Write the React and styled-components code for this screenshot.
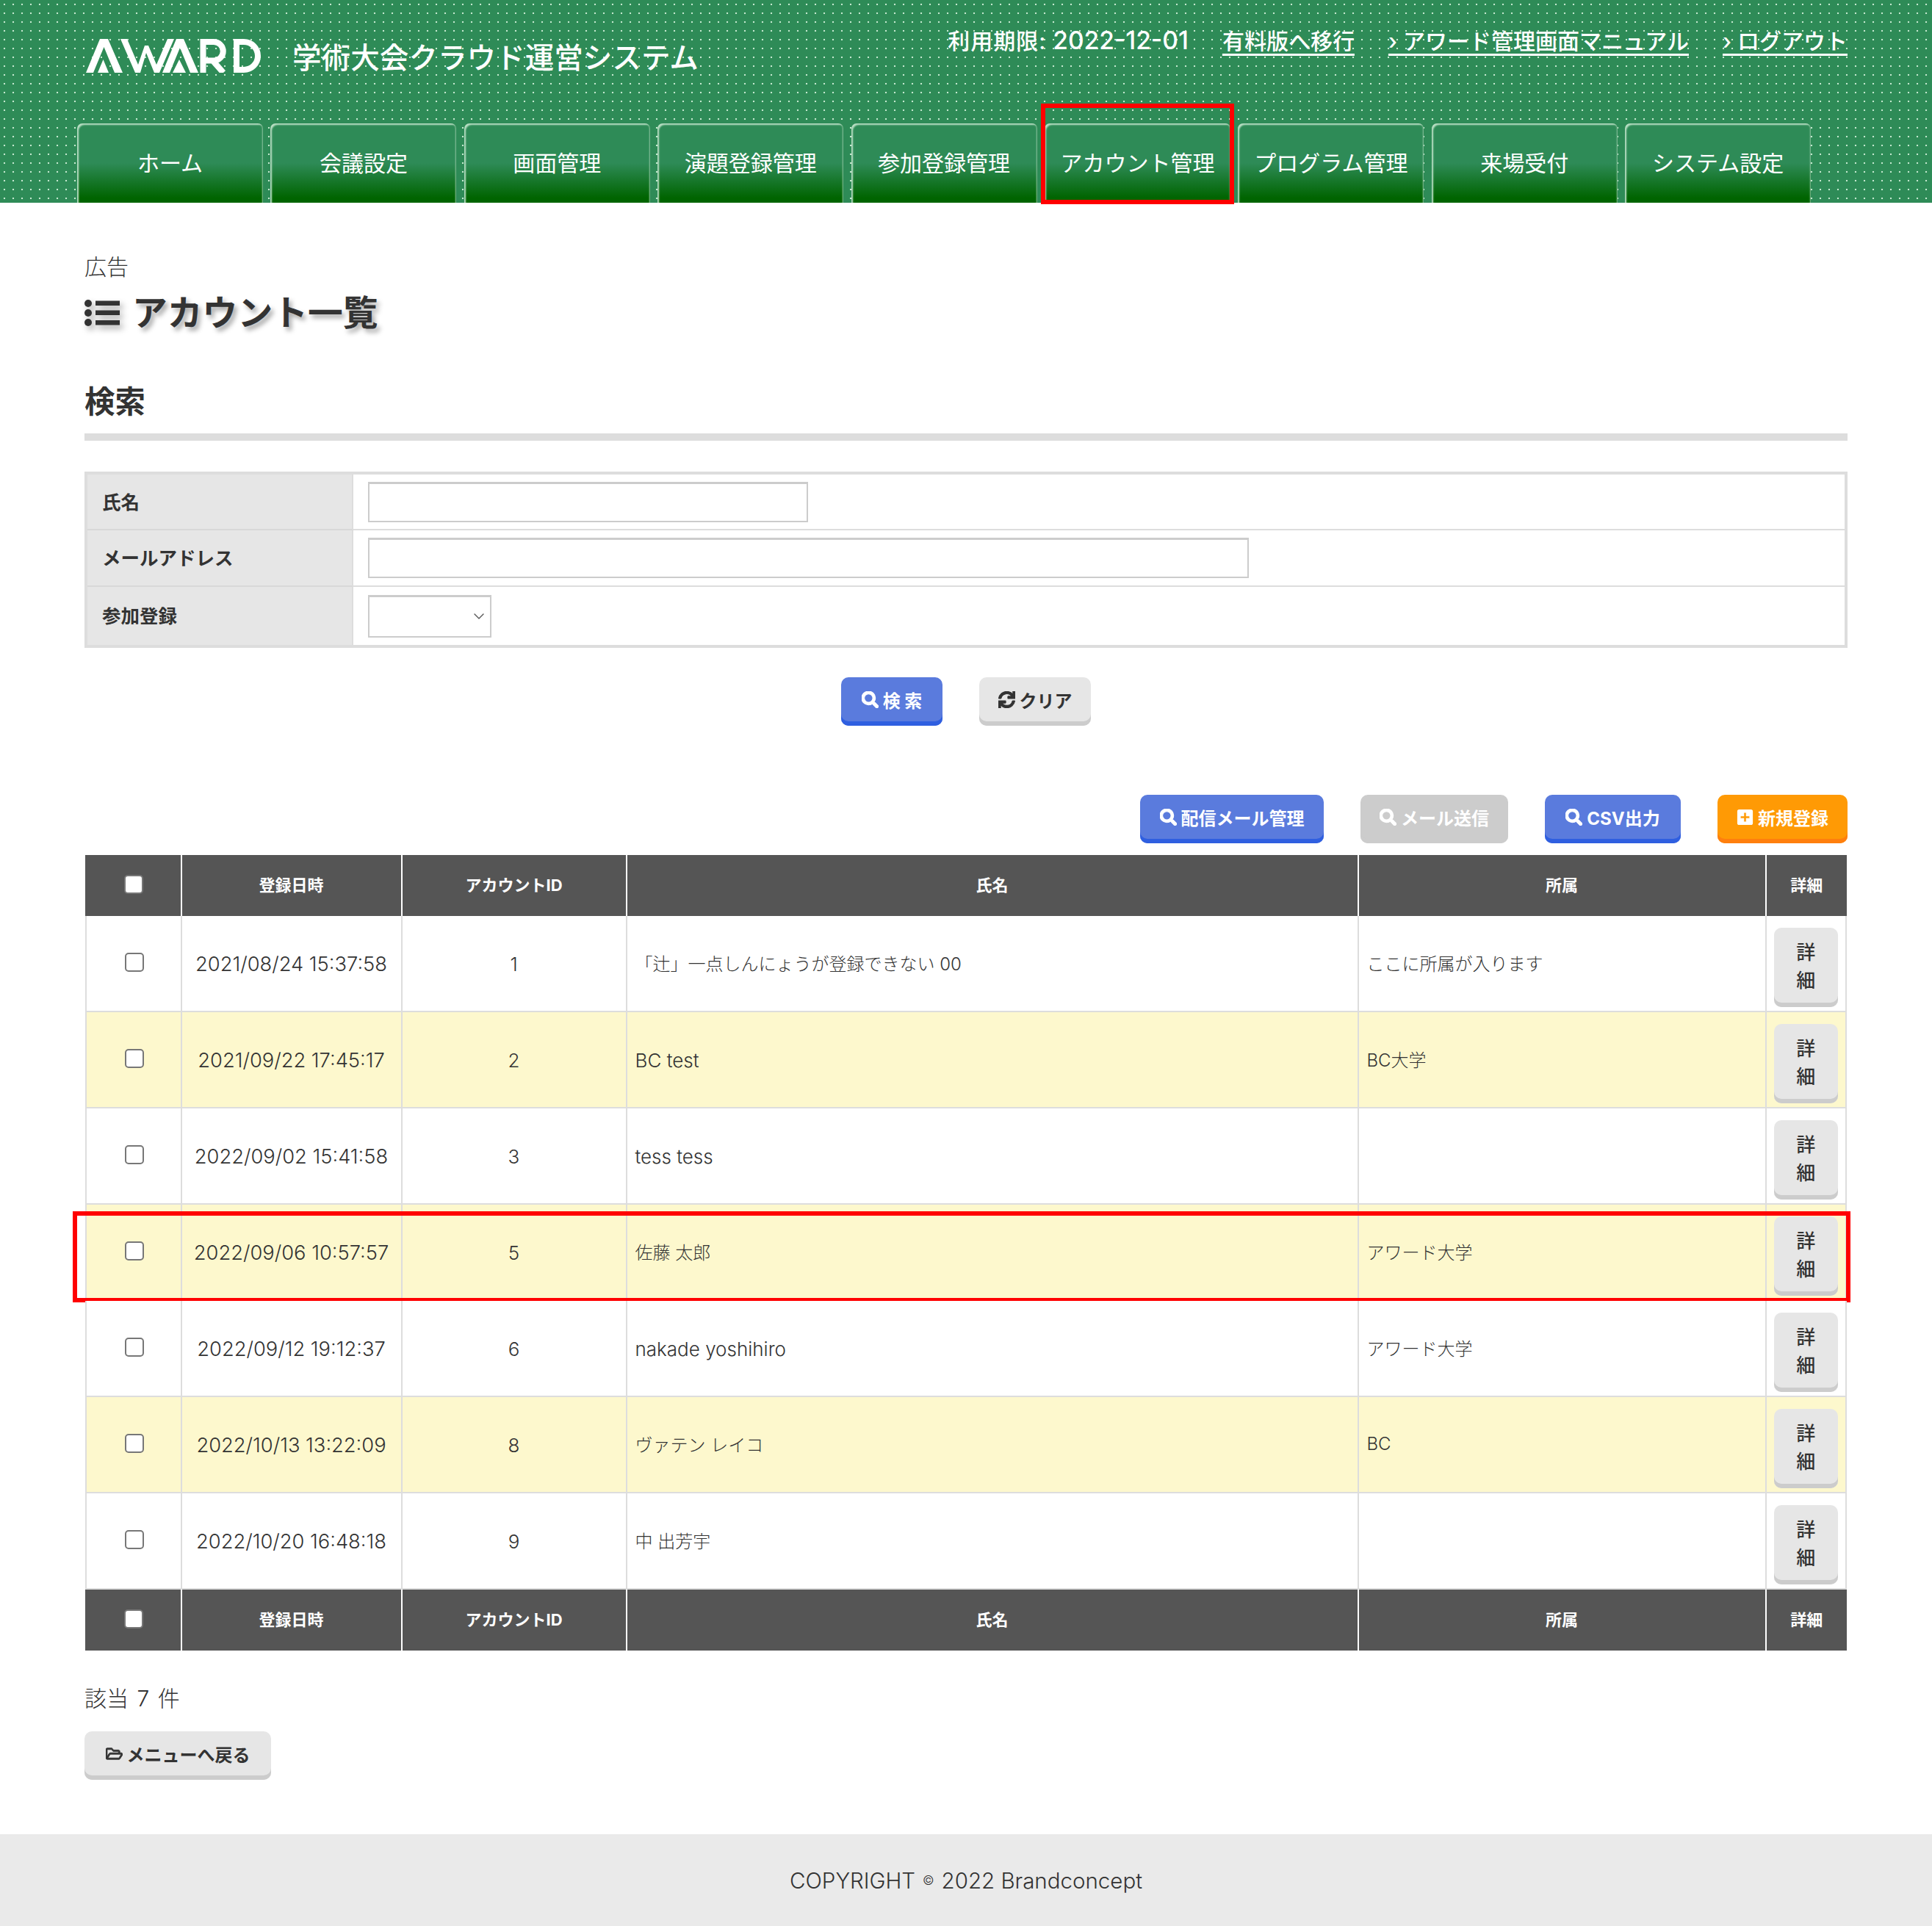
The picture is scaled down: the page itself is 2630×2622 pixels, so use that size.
import React from 'react';
import styled, { createGlobalStyle } from 'styled-components';
import { FaSearch, FaSync, FaPlusSquare, FaRegFolderOpen } from 'react-icons/fa';
import { FiChevronDown } from 'react-icons/fi';

const GlobalStyle = createGlobalStyle`
  html, body {
    margin: 0;
    padding: 0;
    background: #fff;
  }
  body {
    width: 2630px;
    font-family: Inter, "Noto Sans CJK JP", sans-serif;
    color: #333;
  }
  * {
    box-sizing: border-box;
  }
`;

const Header = styled.header`
  height: 276px;
  background-color: #2e8b57;
  background-image: radial-gradient(circle at center, #c4e8cf 1px, transparent 1.6px);
  background-size: 12px 12px;
  display: flex;
  flex-direction: column;
`;

const TopBar = styled.div`
  height: 168px;
  padding: 0 115px 0 117px;
  display: flex;
  justify-content: space-between;
  align-items: flex-start;
`;

const Brand = styled.div`
  display: flex;
  align-items: flex-start;
  gap: 40px;
  padding-top: 53px;
  color: #fff;
`;

const SiteName = styled.div`
  margin-top: -1px;
  font-size: 39.6px;
  line-height: 54px;
  font-weight: 500;
  color: #fff;
`;

const Meta = styled.div`
  display: flex;
  align-items: center;
  gap: 46px;
  padding-top: 32px;
  font-size: 30px;
  line-height: 46px;
  font-weight: 500;
  color: #fff;
`;

const Expiry = styled.span`
  letter-spacing: 1px;
`;

const ExpiryDate = styled.span`
  font-size: 33.5px;
  letter-spacing: 0;
`;

const MetaLink = styled.a`
  color: #fff;
  text-decoration: underline;
  text-decoration-thickness: 3px;
  text-underline-offset: 6px;
`;

const Tabs = styled.nav`
  padding-left: 105px;
  display: flex;
  gap: 10.4px;
  height: 108px;
`;

const Tab = styled.a`
  position: relative;
  width: 253px;
  height: 108px;
  padding-bottom: 4px;
  display: flex;
  align-items: center;
  justify-content: center;
  border-radius: 7px 7px 0 0;
  background: linear-gradient(#2e8b57 0%, #2e8b57 50%, #006400 94%);
  box-shadow: inset 3px 3px 2px -1px #b9dfc4, inset -2px 0 2px -1px #8fc4a0;
  color: #fff;
  font-size: 30px;
  font-weight: 400;

  ${(p) =>
    p.$marked &&
    `
    &::after {
      content: '';
      position: absolute;
      top: -27px;
      left: -5px;
      right: -5px;
      bottom: -2px;
      border: 6px solid #f00;
    }
  `}
`;

const Main = styled.main`
  padding: 70px 115px 0;
`;

const Kicker = styled.div`
  font-size: 30px;
  line-height: 34px;
  font-weight: 300;
`;

const PageTitle = styled.h1`
  margin: 19px 0 0;
  display: flex;
  align-items: center;
  gap: 17px;
  font-size: 47.8px;
  line-height: 54px;
  font-weight: 700;
  color: #333;
  text-shadow: 4px 5px 6px #aaa;

  svg {
    filter: drop-shadow(4px 5px 4px #aaa);
  }
`;

const SectionTitle = styled.h2`
  margin: 66px 0 0;
  padding-bottom: 15px;
  border-bottom: 10px solid #ddd;
  font-size: 41.5px;
  line-height: 56px;
  font-weight: 700;
`;

const SearchForm = styled.div`
  margin-top: 42px;
  border: 4px solid #ddd;
  display: grid;
  grid-template-columns: 362px 1fr;
`;

const FieldLabel = styled.div`
  height: ${(p) => p.$h}px;
  background: #e6e6e6;
  padding-left: 20px;
  padding-bottom: 4px;
  display: flex;
  align-items: center;
  font-size: 25.5px;
  font-weight: 700;
  border-right: 2px solid #ddd;
  border-bottom: ${(p) => (p.$last ? 0 : '2px solid #d8d8d8')};
`;

const FieldCell = styled.div`
  height: ${(p) => p.$h}px;
  padding-left: 20px;
  display: flex;
  align-items: center;
  border-bottom: ${(p) => (p.$last ? 0 : '2px solid #ddd')};
`;

const TextInput = styled.input`
  width: ${(p) => p.$w}px;
  height: 55px;
  border: 2px solid #ccc;
  border-top-width: 3px;
  background: #fff;
  outline: none;
`;

const SelectWrap = styled.div`
  position: relative;
  width: 168px;
  height: 58px;

  svg {
    position: absolute;
    right: 5px;
    top: 17px;
    font-size: 24px;
    color: #555;
    stroke-width: 1.4;
    pointer-events: none;
  }
`;

const Select = styled.select`
  width: 100%;
  height: 100%;
  appearance: none;
  border: 2px solid #ccc;
  border-top-width: 3px;
  background: #fff;
  border-radius: 0;
`;

const SearchButtons = styled.div`
  margin-top: 40px;
  display: flex;
  justify-content: center;
  gap: 50px;
`;

const tones = {
  blue: { bg: '#5a7bdd', edge: '#2f5fe0', color: '#fff' },
  gray: { bg: '#e6e6e6', edge: '#ccc', color: '#333' },
  mute: { bg: '#ccc', edge: '#ccc', color: '#fff' },
  orange: { bg: '#ff9a05', edge: '#ff7f0e', color: '#fff' },
};

const Button = styled.a`
  width: ${(p) => p.$w}px;
  height: 66px;
  border-radius: 10px;
  padding-bottom: 6px;
  display: flex;
  align-items: center;
  justify-content: center;
  gap: 6px;
  font-size: 24px;
  font-weight: 700;
  background: ${(p) => tones[p.$tone].bg};
  color: ${(p) => tones[p.$tone].color};
  box-shadow: inset 0 -6px 0 ${(p) => tones[p.$tone].edge};

  svg {
    font-size: 23px;
    flex: none;
    stroke: currentColor;
    stroke-width: 24;
  }
`;

const ActionBar = styled.div`
  margin-top: 94px;
  display: flex;
  justify-content: flex-end;
  gap: 50px;
`;

const AccountTable = styled.table`
  margin: 16px 0 0 1px;
  width: 2398px;
  table-layout: fixed;
  border-collapse: separate;
  border-spacing: 0;
`;

const HeadCell = styled.th`
  height: 83px;
  padding: 0 0 5px;
  background: #555;
  color: #fff;
  font-size: 22px;
  font-weight: 700;
  text-align: center;
  border-right: 2px solid #fff;
  &:first-child {
    padding: 0 0 3px 2px;
  }
  &:last-child {
    border-right: 0;
  }
`;

const Row = styled.tr`
  position: relative;
  background: ${(p) => (p.$alt ? '#fdf8cd' : '#fff')};

  ${(p) =>
    p.$marked &&
    `
    &::after {
      content: '';
      position: absolute;
      top: 9px;
      left: -17px;
      right: -5px;
      bottom: -2px;
      border: 6px solid #f00;
      pointer-events: none;
    }
  `}
`;

const Cell = styled.td`
  height: 131px;
  padding: ${(p) => (p.$latin ? 2 : 0)}px ${(p) => (p.$center ? 0 : 11)}px ${(p) => (p.$latin ? 0 : 2)}px;
  text-align: ${(p) => (p.$center ? 'center' : 'left')};
  font-size: ${(p) => p.$size || 24}px;
  font-weight: 300;
  border-right: 2px solid #ddd;
  border-bottom: 2px solid #ddd;
  &:first-child {
    border-left: 2px solid #ddd;
    padding-left: 2px;
  }
`;

const Check = styled.input.attrs({ type: 'checkbox' })`
  appearance: none;
  display: block;
  margin: 0 auto 1px;
  width: 26px;
  height: 26px;
  background: #fff;
  border: 2px solid #777;
  border-radius: 5px;
`;

const DetailButton = styled.a`
  display: block;
  width: 87px;
  height: 108px;
  margin: 12px auto 0;
  padding-top: 15px;
  border-radius: 10px;
  background: #e6e6e6;
  box-shadow: inset 0 -6px 0 #ccc;
  color: #333;
  font-size: 26px;
  line-height: 38px;
  font-weight: 500;
  text-align: center;
`;

const Count = styled.div`
  margin-top: 45px;
  font-size: 30px;
  line-height: 40px;
  font-weight: 300;
  word-spacing: 3px;
`;

const BackRow = styled.div`
  margin-top: 25px;
`;

const Footer = styled.footer`
  margin-top: 74px;
  height: 125px;
  background: #eaeaea;
  display: flex;
  align-items: center;
  justify-content: center;
  font-size: 29.5px;
  font-weight: 300;
`;

const Copy = styled.span`
  font-size: 17px;
  margin: 0 10px;
`;

const Logo = () => (
  <svg width="241" height="46" viewBox="0 0 241 46" role="img" aria-label="AWARD" fill="#fff">
    <polygon points="19,0 30,0 50,46 39,46 24.5,11 10,46 0,46" />
    <polygon points="16,46 23.5,28 31,46" />
    <polygon points="47,0 56,0 71,35 80,9 85,9 96,35 111,0 120,0 100,46 93,46 82,19 74,46 67,46" />
    <polygon points="123,0 133,0 153,46 142,46 128,12 114,46 104,46" />
    <polygon points="118,46 127,28 136,46" />
    <path d="M159.5 46V4h14.5a11.5 11.5 0 0 1 0 25.5h-13M173 30l14 16" fill="none" stroke="#fff" strokeWidth="8" />
    <path d="M205 4v38h10a19 19 0 0 0 0-38z" fill="none" stroke="#fff" strokeWidth="8" />
  </svg>
);

const ListIcon = () => (
  <svg width="48" height="42" viewBox="0 0 48 42" fill="#333">
    <circle cx="5" cy="8" r="5" />
    <circle cx="5" cy="21" r="5" />
    <circle cx="5" cy="34" r="5" />
    <rect x="15" y="4.5" width="33" height="6.5" />
    <rect x="15" y="17.5" width="33" height="6.5" />
    <rect x="15" y="31" width="33" height="6.5" />
  </svg>
);

const tabs = ['ホーム', '会議設定', '画面管理', '演題登録管理', '参加登録管理', 'アカウント管理', 'プログラム管理', '来場受付', 'システム設定'];

const columns = [
  { label: '登録日時', width: 300 },
  { label: 'アカウントID', width: 306 },
  { label: '氏名', width: 996 },
  { label: '所属', width: 555 },
  { label: '詳細', width: 109.5 },
];

const rows = [
  { date: '2021/08/24 15:37:58', id: 1, name: '「辻」一点しんにょうが登録できない 00', org: 'ここに所属が入ります' },
  { date: '2021/09/22 17:45:17', id: 2, name: 'BC test', org: 'BC大学' },
  { date: '2022/09/02 15:41:58', id: 3, name: 'tess tess', org: '' },
  { date: '2022/09/06 10:57:57', id: 5, name: '佐藤 太郎', org: 'アワード大学', marked: true },
  { date: '2022/09/12 19:12:37', id: 6, name: 'nakade yoshihiro', org: 'アワード大学' },
  { date: '2022/10/13 13:22:09', id: 8, name: 'ヴァテン レイコ', org: 'BC' },
  { date: '2022/10/20 16:48:18', id: 9, name: '中 出芳宇', org: '' },
];

// 英数字だけのセルは少し大きく見せる
const isLatin = (s) => /^[\x20-\x7e]+$/.test(s);

const HeadRow = () => (
  <tr>
    <HeadCell>
      <Check />
    </HeadCell>
    {columns.map((c) => (
      <HeadCell key={c.label}>{c.label}</HeadCell>
    ))}
  </tr>
);

export default function App() {
  return (
    <>
      <GlobalStyle />
      <Header>
        <TopBar>
          <Brand>
            <Logo />
            <SiteName>学術大会クラウド運営システム</SiteName>
          </Brand>
          <Meta>
            <Expiry>
              利用期限: <ExpiryDate>2022-12-01</ExpiryDate>
            </Expiry>
            <MetaLink>有料版へ移行</MetaLink>
            <MetaLink>› アワード管理画面マニュアル</MetaLink>
            <MetaLink>› ログアウト</MetaLink>
          </Meta>
        </TopBar>
        <Tabs>
          {tabs.map((t) => (
            <Tab key={t} $marked={t === 'アカウント管理'}>
              {t}
            </Tab>
          ))}
        </Tabs>
      </Header>

      <Main>
        <Kicker>広告</Kicker>
        <PageTitle>
          <ListIcon />
          アカウント一覧
        </PageTitle>

        <SectionTitle>検索</SectionTitle>
        <SearchForm>
          <FieldLabel $h={76}>氏名</FieldLabel>
          <FieldCell $h={76}>
            <TextInput $w={599} />
          </FieldCell>
          <FieldLabel $h={77}>メールアドレス</FieldLabel>
          <FieldCell $h={77}>
            <TextInput $w={1199} />
          </FieldCell>
          <FieldLabel $h={79} $last>
            参加登録
          </FieldLabel>
          <FieldCell $h={79} $last>
            <SelectWrap>
              <Select />
              <FiChevronDown />
            </SelectWrap>
          </FieldCell>
        </SearchForm>

        <SearchButtons>
          <Button $w={138} $tone="blue">
            <FaSearch />検 索
          </Button>
          <Button $w={152} $tone="gray">
            <FaSync />クリア
          </Button>
        </SearchButtons>

        <ActionBar>
          <Button $w={250} $tone="blue">
            <FaSearch />配信メール管理
          </Button>
          <Button $w={201} $tone="mute">
            <FaSearch />メール送信
          </Button>
          <Button $w={185} $tone="blue">
            <FaSearch />CSV出力
          </Button>
          <Button $w={177} $tone="orange">
            <FaPlusSquare />新規登録
          </Button>
        </ActionBar>

        <AccountTable>
          <colgroup>
            <col style={{ width: 131.5 }} />
            {columns.map((c) => (
              <col key={c.label} style={{ width: c.width }} />
            ))}
          </colgroup>
          <thead>
            <HeadRow />
          </thead>
          <tbody>
            {rows.map((r, i) => (
              <Row key={r.id} $alt={i % 2 === 1} $marked={r.marked}>
                <Cell $center>
                  <Check />
                </Cell>
                <Cell $center $latin $size={27.3}>
                  {r.date}
                </Cell>
                <Cell $center $latin $size={26}>
                  {r.id}
                </Cell>
                <Cell $latin={isLatin(r.name)} $size={isLatin(r.name) ? 26 : 24}>
                  {r.name}
                </Cell>
                <Cell>{r.org}</Cell>
                <Cell $center>
                  <DetailButton>
                    詳<br />細
                  </DetailButton>
                </Cell>
              </Row>
            ))}
          </tbody>
          <tfoot>
            <HeadRow />
          </tfoot>
        </AccountTable>

        <Count>該当 7 件</Count>
        <BackRow>
          <Button $w={254} $tone="gray">
            <FaRegFolderOpen />メニューへ戻る
          </Button>
        </BackRow>
      </Main>

      <Footer>
        COPYRIGHT<Copy>©</Copy>2022 Brandconcept
      </Footer>
    </>
  );
}
